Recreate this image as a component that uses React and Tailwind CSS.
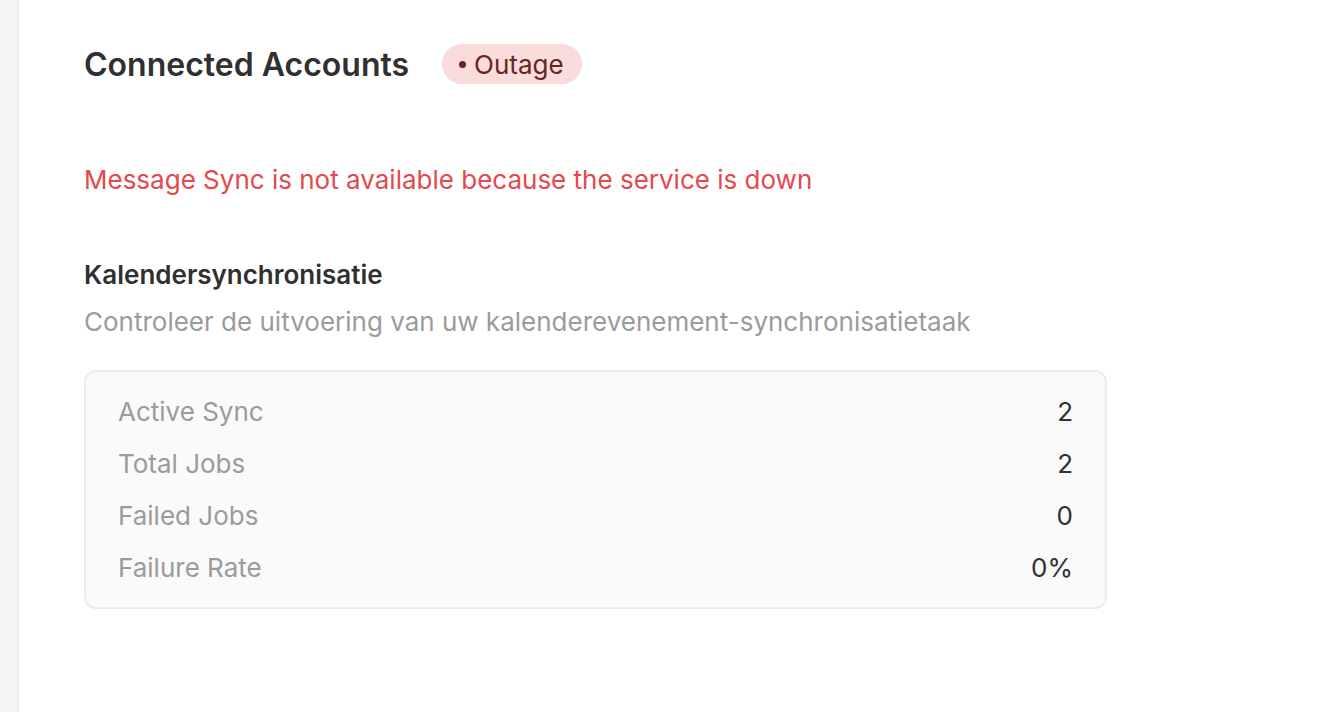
import React from 'react';

const stats = [
    { label: 'Active Sync', value: '2' },
    { label: 'Total Jobs', value: '2' },
    { label: 'Failed Jobs', value: '0' },
    { label: 'Failure Rate', value: '0%' },
];

export default function App() {
    return (
        <div className="flex min-h-[712px] bg-white font-['Inter',sans-serif]">
            {/* Sidebar edge */}
            <div className="w-[19px] shrink-0 bg-[#f4f4f4] border-r border-[#e8e8e8]" />

            <main className="flex-1 pl-[65px] pt-[45px]">
                <div className="flex items-center h-[40px] gap-[33px]">
                    <h1 className="text-[32px] leading-[40px] font-semibold text-[#303030]">Connected Accounts</h1>
                    <span className="flex items-center gap-[8px] h-[40px] pl-[17px] pr-[18px] rounded-full bg-[#f9dcdb] text-[26px] text-[#6a2424] -mt-[2px]">
                        <span className="w-[7px] h-[7px] rounded-full bg-[#6a2424]" />
                        Outage
                    </span>
                </div>

                <p className="mt-[79px] text-[26px] text-[#e5484d] leading-[32px]">
                    Message Sync is not available because the service is down
                </p>

                <h2 className="mt-[63px] text-[26px] font-semibold text-[#303030] leading-[32px]">Kalendersynchronisatie</h2>
                <p className="mt-[15px] text-[26px] text-[#9b9b9b] leading-[32px]">
                    Controleer de uitvoering van uw kalenderevenement-synchronisatietaak
                </p>

                <div className="mt-[32px] w-[1023px] rounded-[12px] border-2 border-[#ececec] bg-[#fafafa] px-[32px] pt-[24px] pb-[23px] flex flex-col gap-[20px]">
                    {stats.map((s) => (
                        <div key={s.label} className="flex justify-between text-[26px] leading-[32px]">
                            <span className="text-[#9b9b9b]">{s.label}</span>
                            <span className="text-[#303030]">{s.value}</span>
                        </div>
                    ))}
                </div>
            </main>
        </div>
    );
}
